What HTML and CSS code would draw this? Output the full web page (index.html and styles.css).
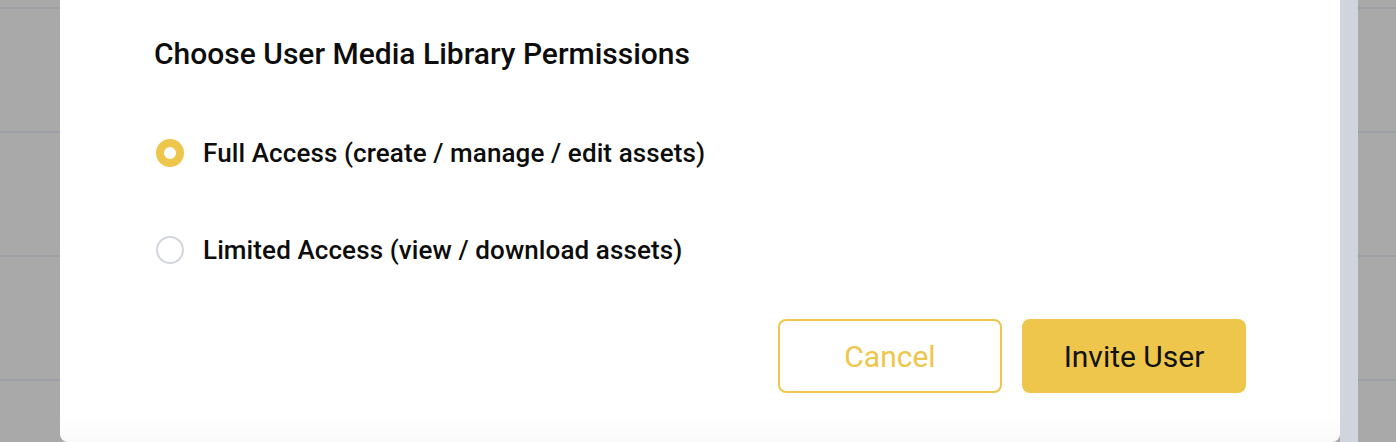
FILE: index.html
```html
<!DOCTYPE html>
<html lang="en">
<head>
    <meta charset="UTF-8">
    <meta name="viewport" content="width=device-width, initial-scale=1.0">
    <title>Invite User</title>
    <link rel="stylesheet" href="styles.css">
</head>
<body>
    <!-- Orqadagi jadval qatorlari (overlay ostida) -->
    <div class="backdrop">
        <div class="bg-row"></div>
        <div class="bg-row"></div>
        <div class="bg-row"></div>
        <div class="bg-row"></div>
    </div>

    <div class="scroll-strip"></div>

    <!-- Modal oyna -->
    <div class="modal">
        <h2 class="modal-title">Choose User Media Library Permissions</h2>

        <div class="options">
            <label class="option">
                <span class="radio checked"></span>
                <span class="option-text">Full Access (create / manage / edit assets)</span>
            </label>
            <label class="option">
                <span class="radio"></span>
                <span class="option-text">Limited Access (view / download assets)</span>
            </label>
        </div>

        <div class="actions">
            <button class="btn btn-outline">Cancel</button>
            <button class="btn btn-primary">Invite User</button>
        </div>
    </div>
</body>
</html>
```

FILE: styles.css
```css
html, body {
    height: 442px;
    overflow: hidden;
}

body {
    font-family: 'Roboto', 'Liberation Sans', sans-serif;
    margin: 0;
    padding: 0;
    background: #a9a9a9;
    color: #111;
    position: relative;
}

.backdrop {
    height: 442px;
    box-sizing: border-box;
    padding-top: 7px;
    overflow: hidden;
}

.bg-row {
    height: 122px;
    border-top: 2px solid #9c9fa4;
}

.bg-row:last-child {
    height: 61px;
}

.scroll-strip {
    position: absolute;
    top: 0;
    left: 1340px;
    width: 18px;
    height: 442px;
    background: #d0d4dc;
}

.modal {
    position: absolute;
    top: 0;
    left: 60px;
    width: 1280px;
    height: 442px;
    box-sizing: border-box;
    padding: 36px 94px 0 94px;
    background: linear-gradient(to bottom, #fff 0%, #fff 94%, #fafafa 100%);
    border-radius: 0 0 8px 8px;
}

.modal-title {
    margin: 0;
    font-size: 30px;
    line-height: 36px;
    font-weight: 500;
    color: #0d0d0d;
}

.options {
    display: flex;
    flex-direction: column;
    gap: 69px;
    margin-top: 67px;
}

.option {
    display: flex;
    align-items: center;
    gap: 19px;
    height: 28px;
    padding-left: 2px;
    cursor: pointer;
}

.radio {
    width: 28px;
    height: 28px;
    box-sizing: border-box;
    border-radius: 50%;
    border: 2px solid #d3d6dd;
    background: #fff;
}

.radio.checked {
    border: 8px solid #eec64b;
}

.option-text {
    font-size: 26px;
    line-height: 30px;
    font-weight: 500;
    letter-spacing: 0.1px;
    color: #0d0d0d;
}

.actions {
    display: flex;
    justify-content: flex-end;
    gap: 20px;
    margin-top: 55px;
}

.btn {
    width: 224px;
    height: 74px;
    border-radius: 8px;
    font-family: 'Roboto', 'Liberation Sans', sans-serif;
    font-size: 30px;
    cursor: pointer;
}

.btn-outline {
    background: #fff;
    border: 2px solid #eec64b;
    color: #eec64b;
}

.btn-primary {
    background: #eec64b;
    border: none;
    color: #111;
}
```
